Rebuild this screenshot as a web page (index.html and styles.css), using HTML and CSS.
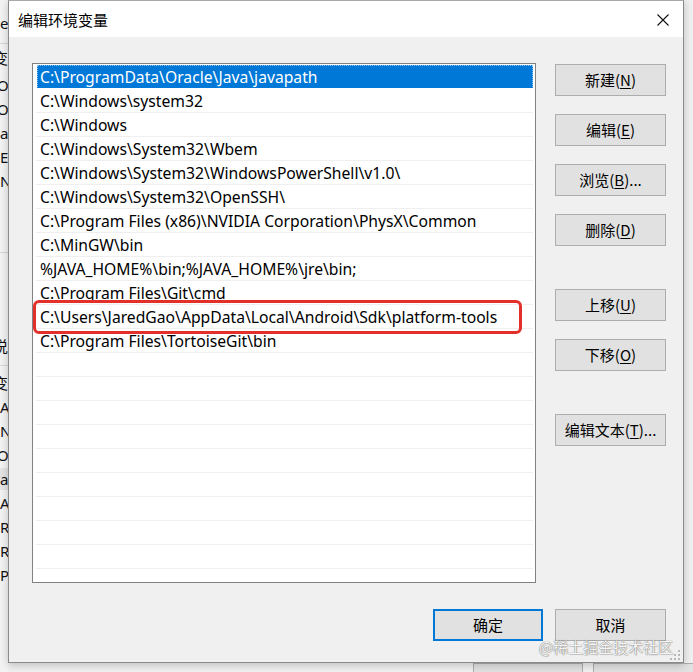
FILE: index.html
```html
<!DOCTYPE html>
<html lang="zh-CN">
<head>
<meta charset="utf-8">
<title>编辑环境变量</title>
<link rel="stylesheet" href="styles.css">
</head>
<body>
<div class="desktop">
  <div class="bg-left">
    <span class="bl i1">ec</span>
    <span class="bl i2 cut">变</span>
    <span class="bl i3 half">Or</span>
    <span class="bl half">Or</span>
    <span class="bl">a</span>
    <span class="bl">E</span>
    <span class="bl">N</span>
    <span class="bl i8 cut">说</span>
    <span class="bl i9 cut">变</span>
    <span class="bl">A</span>
    <span class="bl">NU</span>
    <span class="bl half">OS</span>
    <span class="bl">a</span>
    <span class="bl">A</span>
    <span class="bl">R</span>
    <span class="bl">R</span>
    <span class="bl">P</span>
  </div>
  <div class="bg-mid">
    <div class="bg-bottom">
      <div class="bg-btn"></div>
      <div class="bg-btn"></div>
    </div>
  </div>
  <div class="bg-right">
    <div class="bg-scroll"></div>
  </div>

  <div class="dialog">
    <div class="titlebar">
      <span class="title">编辑环境变量</span>
      <svg class="close" width="12" height="12" viewBox="0 0 12 12"><path d="M0.5 0.5 L11.5 11.5 M11.5 0.5 L0.5 11.5" stroke="#111" stroke-width="1.1" fill="none"/></svg>
    </div>
    <div class="dlg-body">
      <div class="main">
        <div class="listbox">
          <div class="row selected">C:\ProgramData\Oracle\Java\javapath</div>
          <div class="row">C:\Windows\system32</div>
          <div class="row">C:\Windows</div>
          <div class="row">C:\Windows\System32\Wbem</div>
          <div class="row">C:\Windows\System32\WindowsPowerShell\v1.0\</div>
          <div class="row">C:\Windows\System32\OpenSSH\</div>
          <div class="row">C:\Program Files (x86)\NVIDIA Corporation\PhysX\Common</div>
          <div class="row">C:\MinGW\bin</div>
          <div class="row">%JAVA_HOME%\bin;%JAVA_HOME%\jre\bin;</div>
          <div class="row">C:\Program Files\Git\cmd</div>
          <div class="row">C:\Users\JaredGao\AppData\Local\Android\Sdk\platform-tools</div>
          <div class="row">C:\Program Files\TortoiseGit\bin</div>
          <div class="row"></div>
          <div class="row"></div>
          <div class="row"></div>
          <div class="row"></div>
          <div class="row"></div>
          <div class="row"></div>
          <div class="row"></div>
          <div class="row"></div>
          <div class="row"></div>
          <div class="mark"></div>
        </div>
        <div class="side">
          <div class="group">
            <button class="btn">新建(<u>N</u>)</button>
            <button class="btn">编辑(<u>E</u>)</button>
            <button class="btn">浏览(<u>B</u>)...</button>
            <button class="btn">删除(<u>D</u>)</button>
          </div>
          <div class="group">
            <button class="btn">上移(<u>U</u>)</button>
            <button class="btn">下移(<u>O</u>)</button>
          </div>
          <div class="group">
            <button class="btn">编辑文本(<u>T</u>)...</button>
          </div>
        </div>
      </div>
      <div class="footer">
        <button class="btn default">确定</button>
        <button class="btn">取消</button>
      </div>
    </div>
    <div class="watermark">@稀土掘金技术社区</div>
    <svg class="grip" width="12" height="10" viewBox="0 0 12 10">
      <rect x="9" y="0" width="2" height="2" fill="#b8b8b8"/>
      <rect x="5" y="4" width="2" height="2" fill="#b8b8b8"/>
      <rect x="9" y="4" width="2" height="2" fill="#b8b8b8"/>
      <rect x="1" y="8" width="2" height="2" fill="#b8b8b8"/>
      <rect x="5" y="8" width="2" height="2" fill="#b8b8b8"/>
      <rect x="9" y="8" width="2" height="2" fill="#b8b8b8"/>
    </svg>
  </div>
</div>
</body>
</html>
```

FILE: styles.css
```css
* { box-sizing: border-box; }
html, body { margin: 0; padding: 0; }
body {
  width: 693px;
  height: 672px;
  overflow: hidden;
  background: #f0f0f0;
  font-family: "Noto Sans", "Noto Sans CJK SC", sans-serif;
  color: #000;
}
.desktop {
  position: relative;
  width: 693px;
  height: 672px;
  display: grid;
  grid-template-columns: 8px 1fr 9px;
}
.bg-left {
  display: flex;
  flex-direction: column;
  overflow: hidden;
  padding-top: 11px;
  font-size: 15px;
  background:
    linear-gradient(#d6d6d6, #d6d6d6) 0 43px / 100% 1px no-repeat,
    linear-gradient(#d6d6d6, #d6d6d6) 0 252px / 100% 1px no-repeat,
    linear-gradient(#d6d6d6, #d6d6d6) 0 365px / 100% 1px no-repeat,
    linear-gradient(#e4e4e4, #e4e4e4) 0 468px / 100% 22px no-repeat,
    #f3f3f3;
}
.bl { height: 24px; line-height: 24px; white-space: nowrap; color: #111; }
.bl.cut { margin-left: -7px; font-family: "Noto Sans CJK SC", sans-serif; }
.bl.half { margin-left: -3px; }
.bl.i2 { margin-top: 11px; }
.bl.i3 { margin-top: 3px; }
.bl.i8 { margin-top: 141px; }
.bl.i9 { margin-top: 13px; }
.bg-mid { display: flex; flex-direction: column; justify-content: flex-end; }
.bg-bottom {
  height: 9px;
  display: flex;
  gap: 10px;
  padding-left: 465px;
}
.bg-btn {
  width: 110px;
  height: 9px;
  border: 1px solid #adadad;
  border-bottom: none;
  background: #e1e1e1;
}
.bg-right {
  position: relative;
  background:
    linear-gradient(#cfcfcf, #cfcfcf) 0 43px / 100% 1px no-repeat,
    linear-gradient(#cfcfcf, #cfcfcf) 0 252px / 100% 1px no-repeat,
    linear-gradient(#cfcfcf, #cfcfcf) 0 270px / 100% 1px no-repeat,
    linear-gradient(#cfcfcf, #cfcfcf) 0 302px / 100% 1px no-repeat,
    linear-gradient(#cfcfcf, #cfcfcf) 0 323px / 100% 1px no-repeat,
    linear-gradient(#cfcfcf, #cfcfcf) 0 356px / 100% 1px no-repeat,
    linear-gradient(#cfcfcf, #cfcfcf) 0 575px / 100% 1px no-repeat,
    linear-gradient(#cfcfcf, #cfcfcf) 0 594px / 100% 1px no-repeat,
    #f0f0f0;
}
.bg-scroll {
  position: absolute;
  left: 5px;
  top: 418px;
  width: 3px;
  height: 67px;
  background: #c2c2c2;
}

/* dialog window */
.dialog {
  position: absolute;
  left: 8px;
  top: 0;
  width: 676px;
  height: 663px;
  border: 1px solid #8a8a8a;
  border-top-color: #aaaaaa;
  background: #f0f0f0;
  box-shadow: 0 2px 8px rgba(0,0,0,0.22);
  display: flex;
  flex-direction: column;
}
.titlebar {
  height: 36px;
  background: #ffffff;
  display: flex;
  align-items: center;
  justify-content: space-between;
  padding: 0 14px 0 9px;
  flex-shrink: 0;
}
.title {
  font-family: "Noto Sans CJK SC", sans-serif;
  font-size: 15px;
  color: #000;
  padding-top: 1px;
}
.close { display: block; margin-top: 1px; }
.dlg-body {
  flex: 1;
  display: flex;
  flex-direction: column;
  padding: 26px 17px 0 23px;
}
.main {
  display: flex;
  gap: 19px;
}
.listbox {
  position: relative;
  width: 504px;
  height: 520px;
  border: 1px solid #828282;
  background: #fff;
  padding: 1px 2px 0 3px;
  display: flex;
  flex-direction: column;
}
.row {
  height: 24px;
  border-bottom: 1px solid #efefef;
  padding-left: 4px;
  font-size: 15.7px;
  line-height: 24px;
  white-space: nowrap;
  color: #000;
  flex-shrink: 0;
}
.row.selected {
  background: #0078d7;
  color: #fff;
  margin-left: 1px;
  padding-left: 3px;
  outline: 1px dotted rgba(255,255,255,0.55);
  outline-offset: -1px;
  border-bottom-color: #fff;
}
.mark {
  position: absolute;
  left: 0;
  top: 236px;
  width: 489px;
  height: 34px;
  border: 3px solid #e4302b;
  border-radius: 6px;
}
.side {
  display: flex;
  flex-direction: column;
  gap: 43px;
  padding-top: 1px;
}
.group {
  display: flex;
  flex-direction: column;
  gap: 18px;
}
.btn {
  width: 111px;
  height: 32px;
  margin: 0;
  padding: 0;
  border: 1px solid #adadad;
  background: #e1e1e1;
  font-family: "Noto Sans CJK SC", sans-serif;
  font-size: 15px;
  color: #000;
  line-height: 30px;
  text-align: center;
}
.btn u { text-underline-offset: 2px; text-decoration-thickness: 1px; }
.footer {
  display: flex;
  justify-content: flex-end;
  gap: 12px;
  margin-top: 26px;
}
.btn.default {
  width: 110px;
  border: 2px solid #0078d7;
  line-height: 28px;
}
.watermark {
  position: absolute;
  right: 10px;
  bottom: 5px;
  font-family: "Noto Sans CJK SC", sans-serif;
  font-size: 15px;
  color: #f4f4f4;
  text-shadow: 0 0 1px rgba(0,0,0,0.7), 1px 1px 1px rgba(0,0,0,0.15);
}
.grip {
  position: absolute;
  right: 2px;
  bottom: 2px;
}
```
